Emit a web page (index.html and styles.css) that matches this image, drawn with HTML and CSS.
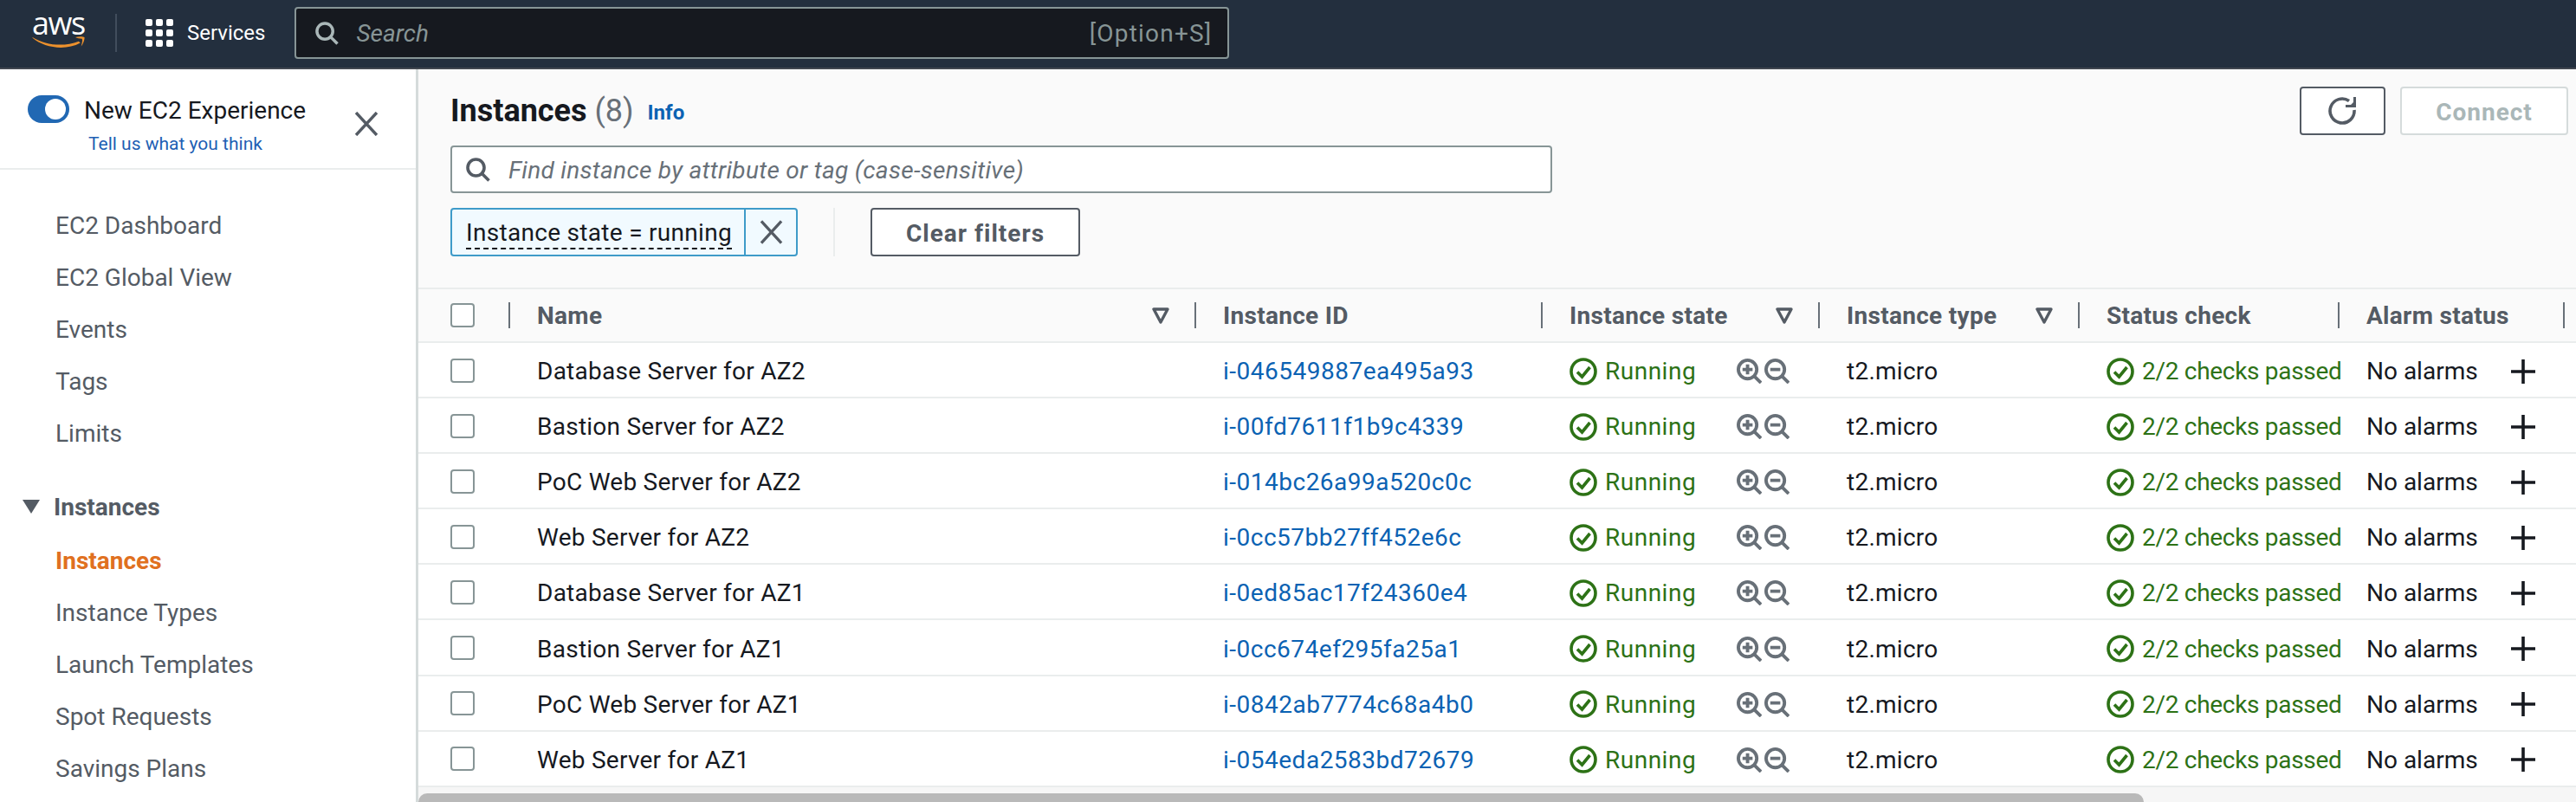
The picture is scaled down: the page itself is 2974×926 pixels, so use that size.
FILE: index.html
```html
<!DOCTYPE html>
<html>
  <head>
    <title>Instances | EC2</title>
    <link rel="stylesheet" href="styles.css">
  </head>
  <body>
    <svg class="sprites" width="0" height="0">
      <symbol id="i-search" viewBox="0 0 28 28"><circle cx="11.500" cy="11.500" r="9.500" fill="none" stroke="currentColor" stroke-width="3.6"/><path d="M18 18 L26.500 26.500" fill="none" stroke="currentColor" stroke-width="3.6"/></symbol>
      <symbol id="i-close" viewBox="0 0 28 28"><path d="M2 1 L26 27 M26 1 L2 27" fill="none" stroke="currentColor" stroke-width="3.4"/></symbol>
      <symbol id="i-sort" viewBox="0 0 20 20"><path d="M2 2 H18 L10 17 Z" fill="none" stroke="currentColor" stroke-width="3.4" stroke-linejoin="round"/></symbol>
      <symbol id="i-ok" viewBox="0 0 32 32"><circle cx="16" cy="16" r="14" fill="none" stroke="currentColor" stroke-width="3.6"/><path d="M9 16.500 L14.500 22 L23.500 11" fill="none" stroke="currentColor" stroke-width="3.6"/></symbol>
      <symbol id="i-zoom-in" viewBox="0 0 30 30"><circle cx="13" cy="13" r="11" fill="none" stroke="currentColor" stroke-width="4"/><path d="M21 21 L29 29 M7 13 H19 M13 7 V19" fill="none" stroke="currentColor" stroke-width="4"/></symbol>
      <symbol id="i-zoom-out" viewBox="0 0 30 30"><circle cx="13" cy="13" r="11" fill="none" stroke="currentColor" stroke-width="4"/><path d="M21 21 L29 29 M7 13 H19" fill="none" stroke="currentColor" stroke-width="4"/></symbol>
      <symbol id="i-plus" viewBox="0 0 28 28"><path d="M0 14 H28 M14 0 V28" fill="none" stroke="currentColor" stroke-width="3.6"/></symbol>
    </svg>

    <header class="topbar">
      <a class="logo">
        <span class="logo-text">aws</span>
        <svg class="logo-smile" viewBox="0 0 64 16" fill="#ec912d"><path d="M0 2 C16 12 38 14 56 7 L58 9 C40 19 14 15 0 3 Z"/><path d="M52 2 C56 1 61 1 63 2 C63.500 5 61 11 59 13 C60 9 61 6 60 4 C57 3.500 54 3 52 2 Z"/></svg>
      </a>
      <span class="topbar-sep"></span>
      <svg class="grid-icon" viewBox="0 0 32 32" fill="#fff">
        <rect x="0" y="0" width="8" height="8" rx="2"/><rect x="12" y="0" width="8" height="8" rx="2"/><rect x="24" y="0" width="8" height="8" rx="2"/>
        <rect x="0" y="12" width="8" height="8" rx="2"/><rect x="12" y="12" width="8" height="8" rx="2"/><rect x="24" y="12" width="8" height="8" rx="2"/>
        <rect x="0" y="24" width="8" height="8" rx="2"/><rect x="12" y="24" width="8" height="8" rx="2"/><rect x="24" y="24" width="8" height="8" rx="2"/>
      </svg>
      <span class="services">Services</span>
      <div class="global-search">
        <svg class="global-search-icon"><use href="#i-search"/></svg>
        <span class="global-search-text">Search</span>
        <span class="global-search-key">[Option+S]</span>
      </div>
    </header>

    <div class="layout">
      <aside class="sidenav">
        <div class="experience">
          <span class="toggle"></span>
          <div class="experience-text">
            <div class="experience-title">New EC2 Experience</div>
            <a class="experience-link">Tell us what you think</a>
          </div>
          <svg class="experience-close"><use href="#i-close"/></svg>
        </div>
        <nav class="nav">
          <a class="nav-item">EC2 Dashboard</a>
          <a class="nav-item">EC2 Global View</a>
          <a class="nav-item">Events</a>
          <a class="nav-item">Tags</a>
          <a class="nav-item">Limits</a>
          <div class="nav-section"><span class="nav-caret"></span>Instances</div>
          <a class="nav-item nav-active">Instances</a>
          <a class="nav-item">Instance Types</a>
          <a class="nav-item">Launch Templates</a>
          <a class="nav-item">Spot Requests</a>
          <a class="nav-item">Savings Plans</a>
        </nav>
      </aside>

      <main class="content">
        <section class="panel-head">
          <div class="panel-top">
            <h1 class="panel-title">Instances <span class="panel-count">(8)</span></h1>
            <a class="info-link">Info</a>
            <div class="panel-actions">
              <button class="btn btn-icon"><svg viewBox="0 0 33 32" width="33" height="32"><path d="M30 15 A14 14 0 1 1 24 4.500" fill="none" stroke="currentColor" stroke-width="3.6"/><path d="M32 0 V12 H20 V9 H26 L29 6 V0 Z" fill="currentColor"/></svg></button>
              <button class="btn btn-disabled">Connect</button>
            </div>
          </div>
          <div class="filter-input">
            <svg class="filter-icon"><use href="#i-search"/></svg>
            <span class="filter-placeholder">Find instance by attribute or tag (case-sensitive)</span>
          </div>
          <div class="filter-tokens">
            <div class="token">
              <span class="token-label"><span class="token-text">Instance state = running</span></span>
              <span class="token-remove"><svg class="token-x"><use href="#i-close"/></svg></span>
            </div>
            <span class="filter-sep"></span>
            <button class="btn btn-clear">Clear filters</button>
          </div>
        </section>

        <section class="table">
          <div class="row row-head">
            <div class="cell cell-check"><span class="checkbox"></span></div>
            <div class="cell cell-sep-light">Name<svg class="sort"><use href="#i-sort"/></svg></div>
            <div class="cell">Instance ID</div>
            <div class="cell">Instance state<svg class="sort"><use href="#i-sort"/></svg></div>
            <div class="cell">Instance type<svg class="sort"><use href="#i-sort"/></svg></div>
            <div class="cell">Status check</div>
            <div class="cell">Alarm status</div>
            <div class="cell-end"></div>
          </div>

          <div class="row">
            <div class="cell cell-check"><span class="checkbox"></span></div>
            <div class="cell cell-name">Database Server for AZ2</div>
            <div class="cell"><a class="id-link">i-046549887ea495a93</a></div>
            <div class="cell"><span class="ok ok-state"><svg class="ok-icon"><use href="#i-ok"/></svg>Running</span><span class="zooms"><svg><use href="#i-zoom-in"/></svg><svg><use href="#i-zoom-out"/></svg></span></div>
            <div class="cell cell-name">t2.micro</div>
            <div class="cell"><span class="ok ok-checks"><svg class="ok-icon"><use href="#i-ok"/></svg>2/2 checks passed</span></div>
            <div class="cell">No alarms<svg class="plus"><use href="#i-plus"/></svg></div>
          </div>
          <div class="row">
            <div class="cell cell-check"><span class="checkbox"></span></div>
            <div class="cell cell-name">Bastion Server for AZ2</div>
            <div class="cell"><a class="id-link">i-00fd7611f1b9c4339</a></div>
            <div class="cell"><span class="ok ok-state"><svg class="ok-icon"><use href="#i-ok"/></svg>Running</span><span class="zooms"><svg><use href="#i-zoom-in"/></svg><svg><use href="#i-zoom-out"/></svg></span></div>
            <div class="cell cell-name">t2.micro</div>
            <div class="cell"><span class="ok ok-checks"><svg class="ok-icon"><use href="#i-ok"/></svg>2/2 checks passed</span></div>
            <div class="cell">No alarms<svg class="plus"><use href="#i-plus"/></svg></div>
          </div>
          <div class="row">
            <div class="cell cell-check"><span class="checkbox"></span></div>
            <div class="cell cell-name">PoC Web Server for AZ2</div>
            <div class="cell"><a class="id-link">i-014bc26a99a520c0c</a></div>
            <div class="cell"><span class="ok ok-state"><svg class="ok-icon"><use href="#i-ok"/></svg>Running</span><span class="zooms"><svg><use href="#i-zoom-in"/></svg><svg><use href="#i-zoom-out"/></svg></span></div>
            <div class="cell cell-name">t2.micro</div>
            <div class="cell"><span class="ok ok-checks"><svg class="ok-icon"><use href="#i-ok"/></svg>2/2 checks passed</span></div>
            <div class="cell">No alarms<svg class="plus"><use href="#i-plus"/></svg></div>
          </div>
          <div class="row">
            <div class="cell cell-check"><span class="checkbox"></span></div>
            <div class="cell cell-name">Web Server for AZ2</div>
            <div class="cell"><a class="id-link">i-0cc57bb27ff452e6c</a></div>
            <div class="cell"><span class="ok ok-state"><svg class="ok-icon"><use href="#i-ok"/></svg>Running</span><span class="zooms"><svg><use href="#i-zoom-in"/></svg><svg><use href="#i-zoom-out"/></svg></span></div>
            <div class="cell cell-name">t2.micro</div>
            <div class="cell"><span class="ok ok-checks"><svg class="ok-icon"><use href="#i-ok"/></svg>2/2 checks passed</span></div>
            <div class="cell">No alarms<svg class="plus"><use href="#i-plus"/></svg></div>
          </div>
          <div class="row">
            <div class="cell cell-check"><span class="checkbox"></span></div>
            <div class="cell cell-name">Database Server for AZ1</div>
            <div class="cell"><a class="id-link">i-0ed85ac17f24360e4</a></div>
            <div class="cell"><span class="ok ok-state"><svg class="ok-icon"><use href="#i-ok"/></svg>Running</span><span class="zooms"><svg><use href="#i-zoom-in"/></svg><svg><use href="#i-zoom-out"/></svg></span></div>
            <div class="cell cell-name">t2.micro</div>
            <div class="cell"><span class="ok ok-checks"><svg class="ok-icon"><use href="#i-ok"/></svg>2/2 checks passed</span></div>
            <div class="cell">No alarms<svg class="plus"><use href="#i-plus"/></svg></div>
          </div>
          <div class="row">
            <div class="cell cell-check"><span class="checkbox"></span></div>
            <div class="cell cell-name">Bastion Server for AZ1</div>
            <div class="cell"><a class="id-link">i-0cc674ef295fa25a1</a></div>
            <div class="cell"><span class="ok ok-state"><svg class="ok-icon"><use href="#i-ok"/></svg>Running</span><span class="zooms"><svg><use href="#i-zoom-in"/></svg><svg><use href="#i-zoom-out"/></svg></span></div>
            <div class="cell cell-name">t2.micro</div>
            <div class="cell"><span class="ok ok-checks"><svg class="ok-icon"><use href="#i-ok"/></svg>2/2 checks passed</span></div>
            <div class="cell">No alarms<svg class="plus"><use href="#i-plus"/></svg></div>
          </div>
          <div class="row">
            <div class="cell cell-check"><span class="checkbox"></span></div>
            <div class="cell cell-name">PoC Web Server for AZ1</div>
            <div class="cell"><a class="id-link">i-0842ab7774c68a4b0</a></div>
            <div class="cell"><span class="ok ok-state"><svg class="ok-icon"><use href="#i-ok"/></svg>Running</span><span class="zooms"><svg><use href="#i-zoom-in"/></svg><svg><use href="#i-zoom-out"/></svg></span></div>
            <div class="cell cell-name">t2.micro</div>
            <div class="cell"><span class="ok ok-checks"><svg class="ok-icon"><use href="#i-ok"/></svg>2/2 checks passed</span></div>
            <div class="cell">No alarms<svg class="plus"><use href="#i-plus"/></svg></div>
          </div>
          <div class="row">
            <div class="cell cell-check"><span class="checkbox"></span></div>
            <div class="cell cell-name">Web Server for AZ1</div>
            <div class="cell"><a class="id-link">i-054eda2583bd72679</a></div>
            <div class="cell"><span class="ok ok-state"><svg class="ok-icon"><use href="#i-ok"/></svg>Running</span><span class="zooms"><svg><use href="#i-zoom-in"/></svg><svg><use href="#i-zoom-out"/></svg></span></div>
            <div class="cell cell-name">t2.micro</div>
            <div class="cell"><span class="ok ok-checks"><svg class="ok-icon"><use href="#i-ok"/></svg>2/2 checks passed</span></div>
            <div class="cell">No alarms<svg class="plus"><use href="#i-plus"/></svg></div>
          </div>
        </section>

        <div class="hscroll"><div class="hscroll-thumb"></div></div>
      </main>
    </div>
  </body>
</html>
```

FILE: styles.css
```css
* {
  box-sizing: border-box;
}
html, body {
  margin: 0;
  height: 926px;
  overflow: hidden;
}
body {
  background-color: #fff;
  color: #16191f;
  font-family: "Roboto", "Liberation Sans", sans-serif;
  font-size: 28px;
}
.sprites {
  display: block;
  height: 0;
}
a {
  color: inherit;
}
button {
  font: inherit;
}

/* top bar */
.topbar {
  display: flex;
  align-items: center;
  height: 80px;
  padding: 0 0 2px 36px;
  background-color: #232f3e;
  border-bottom: 2px solid #414750;
  color: #fff;
}
.logo {
  display: flex;
  flex-direction: column;
  flex: none;
  width: 64px;
  height: 40px;
  margin-top: -3px;
}
.logo-text {
  height: 26px;
  padding-left: 1px;
  font-family: "Open Sans", sans-serif;
  font-size: 36px;
  line-height: 20px;
  letter-spacing: -1.500px;
  color: #fff;
}
.logo-smile {
  width: 64px;
  height: 16px;
}
.topbar-sep {
  width: 2px;
  height: 44px;
  margin: 0 33px;
  background-color: #414d5c;
}
.grid-icon {
  width: 32px;
  height: 32px;
}
.services {
  margin-left: 16px;
  font-size: 24px;
}
.global-search {
  display: flex;
  align-items: center;
  width: 1079px;
  height: 60px;
  margin-left: 34px;
  padding: 0 18px 0 22px;
  background-color: #16191f;
  border: 2px solid #879596;
  border-radius: 4px;
}
.global-search-icon {
  width: 27px;
  height: 27px;
  color: #aab7b8;
}
.global-search-text {
  margin-left: 20px;
  font-style: italic;
  font-size: 28px;
  color: #879596;
}
.global-search-key {
  margin-left: auto;
  font-size: 28px;
  letter-spacing: 1.200px;
  color: #879596;
}

/* layout */
.layout {
  display: flex;
  height: 846px;
}
.sidenav {
  flex: none;
  width: 483px;
  background-color: #fff;
  border-right: 3px solid #d5dbdb;
}
.experience {
  display: flex;
  height: 116px;
  padding: 30px 0 0 32px;
  border-bottom: 2px solid #eaeded;
}
.toggle {
  flex: none;
  width: 48px;
  height: 32px;
  background-color: #2168b3;
  border-radius: 16px;
  position: relative;
}
.toggle::after {
  content: "";
  position: absolute;
  right: 4px;
  top: 4px;
  width: 24px;
  height: 24px;
  background-color: #fff;
  border-radius: 50%;
}
.experience-text {
  width: 280px;
  margin-left: 17px;
}
.experience-title {
  height: 36px;
  line-height: 36px;
}
.experience-link {
  display: block;
  margin: 6px 0 0 5px;
  font-size: 21px;
  line-height: 28px;
  color: #1d5fb4;
}
.experience-close {
  flex: none;
  width: 28px;
  height: 28px;
  margin: 19px 0 0 32px;
  color: #545b64;
}
.nav {
  display: flex;
  flex-direction: column;
  padding-top: 34px;
}
.nav-item {
  display: block;
  height: 60px;
  padding-left: 64px;
  line-height: 62px;
  color: #545b64;
}
.nav-section {
  display: flex;
  align-items: center;
  height: 64px;
  margin-top: 23px;
  padding-left: 26px;
  font-weight: 700;
  color: #545b64;
}
.nav-caret {
  width: 0;
  height: 0;
  margin-right: 16px;
  border-left: 10px solid transparent;
  border-right: 10px solid transparent;
  border-top: 16px solid #545b64;
}
.nav-active {
  font-weight: 700;
  color: #e07020;
}

/* page head */
.content {
  flex: 1;
  display: flex;
  flex-direction: column;
  min-width: 0;
  background-color: #fafafa;
}
.panel-head {
  display: flex;
  flex-direction: column;
  height: 252px;
  padding: 20px 9px 0 37px;
}
.panel-top {
  display: flex;
  align-items: flex-start;
  height: 68px;
}
.panel-title {
  margin: 0;
  font-size: 36px;
  line-height: 56px;
  font-weight: 700;
}
.panel-count {
  font-weight: 400;
  color: #687078;
}
.info-link {
  margin: 12px 0 0 16px;
  font-size: 24px;
  line-height: 36px;
  font-weight: 700;
  color: #0b62b3;
}
.panel-actions {
  display: flex;
  gap: 17px;
  margin-left: auto;
}
.btn {
  display: flex;
  align-items: center;
  justify-content: center;
  height: 56px;
  padding: 2px 0 0;
  background-color: #fff;
  border: 2px solid #545b64;
  border-radius: 4px;
  font-weight: 700;
  letter-spacing: 1px;
  color: #545b64;
}
.btn-icon {
  width: 99px;
  padding: 0;
}
.btn-disabled {
  width: 194px;
  border-color: #d5dbdb;
  color: #aab7b8;
}
.filter-input {
  display: flex;
  align-items: center;
  width: 1272px;
  height: 55px;
  padding-left: 16px;
  background-color: #fff;
  border: 2px solid #879596;
  border-radius: 4px;
}
.filter-icon {
  flex: none;
  width: 28px;
  height: 28px;
  color: #545b64;
}
.filter-placeholder {
  margin: 2px 0 0 21px;
  font-style: italic;
  letter-spacing: 0.3px;
  color: #687078;
}
.filter-tokens {
  display: flex;
  align-items: stretch;
  height: 56px;
  margin-top: 17px;
}
.token {
  display: flex;
  width: 401px;
  background-color: #f1faff;
  border: 2px solid #3e9bc9;
  border-radius: 4px;
}
.token-label {
  display: flex;
  align-items: center;
  width: 339px;
  padding-left: 16px;
  border-right: 2px solid #3e9bc9;
}
.token-text {
  height: 37px;
  line-height: 36px;
  margin-top: 2px;
  border-bottom: 2px dashed #16191f;
  letter-spacing: 0.3px;
}
.token-remove {
  display: flex;
  align-items: center;
  justify-content: center;
  flex: 1;
}
.token-x {
  width: 27px;
  height: 28px;
  color: #545b64;
}
.filter-sep {
  width: 2px;
  margin: 0 41px;
  background-color: #eaeded;
}
.btn-clear {
  width: 242px;
}

/* table */
.table {
  flex: none;
  border-top: 2px solid #eaeded;
}
.row {
  display: grid;
  grid-template-columns: 104px 792px 400px 320px 300px 300px 260px 15px;
  align-items: center;
  height: 64.1px;
  padding-top: 1px;
  background-color: #fff;
  border-bottom: 2px solid #eaeded;
}
.row-head {
  height: 62px;
  padding-top: 0;
  background-color: #fafafa;
  font-weight: 700;
  letter-spacing: 0.3px;
  color: #545b64;
}
.cell {
  display: flex;
  align-items: center;
  position: relative;
  padding-top: 2px;
  padding-left: 33px;
  white-space: nowrap;
}
.cell-check {
  padding-top: 0;
  padding-left: 37px;
}
.cell-name {
  letter-spacing: 0.25px;
}
.checkbox {
  display: block;
  width: 28px;
  height: 28px;
  background-color: #fff;
  border: 2px solid #879596;
  border-radius: 4px;
}
.row-head .cell {
  height: 30px;
  padding-top: 0;
}
.row-head .cell + .cell {
  padding-left: 31px;
  border-left: 2px solid #687078;
}
.row-head .cell-sep-light {
  border-left-color: #eaeded;
}
.row-head .cell-end {
  height: 30px;
  border-left: 2px solid #687078;
}
.sort {
  position: absolute;
  right: 29px;
  top: 6px;
  width: 20px;
  height: 20px;
}
.id-link {
  letter-spacing: 0.5px;
  color: #0b62b3;
}
.ok {
  display: flex;
  align-items: center;
  color: #2d7216;
}
.ok-state {
  letter-spacing: 0.5px;
}
.ok-checks {
  letter-spacing: -0.3px;
}
.ok-icon {
  flex: none;
  width: 32px;
  height: 32px;
  margin-right: 9px;
}
.zooms {
  display: flex;
  gap: 3px;
  margin-left: 47px;
  color: #687078;
}
.zooms svg {
  width: 29px;
  height: 29px;
}
.plus {
  flex: none;
  width: 28px;
  height: 28px;
  margin-left: 38px;
}

/* bottom scrollbar */
.hscroll {
  flex: 1;
  display: flex;
  align-items: flex-end;
  background-color: #f6f6f6;
}
.hscroll-thumb {
  width: 1992px;
  height: 10px;
  background-color: #b9b9b9;
  border-radius: 10px 10px 0 0;
}
```
